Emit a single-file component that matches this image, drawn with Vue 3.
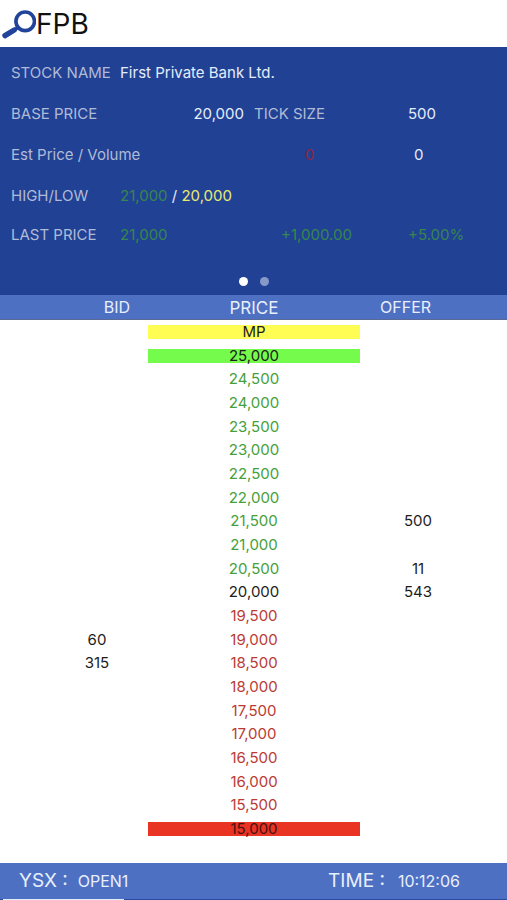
<script setup>
const rows = [{ price: 'MP', tone: 'market' }]
const bids = { 19000: '60', 18500: '315' }
const offers = { 21500: '500', 20500: '11', 20000: '543' }
const base = 20000
const ceiling = 25000
const floor = 15000

for (let p = ceiling; p >= floor; p -= 500) {
  let tone = 'base'
  if (p === ceiling) tone = 'ceiling'
  else if (p === floor) tone = 'floor'
  else if (p > base) tone = 'up'
  else if (p < base) tone = 'down'
  rows.push({ price: p.toLocaleString('en-US'), tone, bid: bids[p], offer: offers[p] })
}
</script>

<template>
  <div class="page">
    <header class="top">
      <button class="search" type="button" aria-label="Search">
        <svg viewBox="0 0 36 32" width="36" height="32" fill="none" stroke="#21439a">
          <circle cx="25.2" cy="13.3" r="9.3" stroke-width="3.6" />
          <path d="M18 19.4 14 22.4" stroke-width="3.6" />
          <path d="M14.2 22 5 27.6" stroke-width="5.4" stroke-linecap="round" />
        </svg>
      </button>
      <h1>FPB</h1>
    </header>

    <section class="summary">
      <div class="line">
        <span class="label">STOCK NAME</span>
        <span class="name">First Private Bank Ltd.</span>
      </div>
      <div class="line">
        <span class="label">BASE PRICE</span>
        <span class="right">20,000</span>
        <span class="label">TICK SIZE</span>
        <span>500</span>
      </div>
      <div class="line">
        <span class="label pair">Est Price / Volume</span>
        <span class="est">0</span>
        <span class="volume">0</span>
      </div>
      <div class="line">
        <span class="label">HIGH/LOW</span>
        <span class="range"><span class="gain">21,000</span> / <span class="low">20,000</span></span>
      </div>
      <div class="line last">
        <span class="label">LAST PRICE</span>
        <span class="gain">21,000</span>
        <span class="gain change">+1,000.00</span>
        <span class="gain">+5.00%</span>
      </div>
      <div class="dots">
        <button class="dot active" type="button" aria-label="Page 1"></button>
        <button class="dot" type="button" aria-label="Page 2"></button>
      </div>
    </section>

    <table class="book">
      <thead>
        <tr>
          <th class="bid" scope="col">BID</th>
          <th class="price" scope="col">PRICE</th>
          <th class="offer" scope="col">OFFER</th>
        </tr>
      </thead>
      <tbody>
        <tr v-for="row in rows" :key="row.price">
          <td class="bid">{{ row.bid }}</td>
          <td class="price"><span :class="['level', row.tone]">{{ row.price }}</span></td>
          <td class="offer">{{ row.offer }}</td>
        </tr>
      </tbody>
    </table>

    <footer class="status">
      <span class="key">YSX :</span>
      <span class="value">OPEN1</span>
      <span class="key time">TIME :</span>
      <span class="value clock">10:12:06</span>
    </footer>
    <div class="edge"><div class="tab"></div></div>
  </div>
</template>

<style>
body {
  margin: 0;
  background: #fff;
}
</style>

<style scoped>
.page {
  display: flex;
  flex-direction: column;
  min-height: 100vh;
  font-family: Inter, "Liberation Sans", sans-serif;
  font-size: 15px;
  line-height: 18px;
  color: #1c1c1c;
}
.top {
  display: flex;
  align-items: center;
  height: 47px;
}
.search {
  display: flex;
  padding: 0;
  border: 0;
  background: none;
}
h1 {
  margin: 0;
  font-size: 28px;
  line-height: 32px;
  font-weight: 400;
  color: #111;
}
.summary {
  padding-top: 5px;
  background: #214195;
  color: #e4edfb;
}
.line {
  display: grid;
  grid-template-columns: 109fr 134fr 154fr 99fr;
  align-items: center;
  height: 41px;
  padding-left: 11px;
  white-space: nowrap;
}
.line.last {
  height: 38px;
}
.label {
  color: #b0bbd6;
}
.name {
  grid-column: 2 / 5;
}
.right {
  padding-right: 10px;
  text-align: right;
}
.pair {
  grid-column: 1 / 3;
}
.est {
  padding-left: 51px;
  color: #8c2745;
}
.volume {
  padding-left: 6px;
}
.gain {
  color: #37864f;
}
.low {
  color: #e9ea72;
}
.change {
  padding-left: 27px;
}
.dots {
  display: flex;
  justify-content: center;
  gap: 12px;
  padding: 23px 0 9px;
}
.dot {
  width: 9px;
  height: 9px;
  padding: 0;
  border: 0;
  border-radius: 50%;
  background: #8799c9;
}
.dot.active {
  background: #fff;
}
.book {
  display: flex;
  flex: 1;
  flex-direction: column;
  margin-bottom: 22px;
}
.book tr {
  display: grid;
  grid-template-columns: 148fr 212fr 147fr;
  align-items: center;
}
.book th,
.book td {
  padding: 0;
  text-align: center;
  font-weight: 400;
}
.book thead {
  display: block;
  background: #4e70c3;
  border-bottom: 1px solid #5a6a94;
  color: #e8effc;
}
.book thead tr {
  height: 24px;
}
.book th {
  font-size: 16px;
}
.book th.bid {
  padding-right: 18px;
  text-align: right;
}
.book th.price {
  padding-top: 2px;
  font-size: 17px;
}
.book th.offer {
  padding-left: 20px;
  text-align: left;
}
.book tbody {
  display: grid;
  flex: 1;
  grid-auto-rows: 1fr;
}
.book td.bid {
  padding-left: 46px;
}
.book td.offer {
  padding-right: 31px;
}
.level {
  display: block;
  height: 14px;
  line-height: 14px;
}
.market {
  background: #fffd54;
}
.ceiling {
  background: #75fb4c;
}
.floor {
  background: #e93323;
  color: #4a1010;
}
.up {
  color: #46a03a;
}
.down {
  color: #bb3a33;
}
.status {
  display: flex;
  align-items: center;
  height: 36px;
  padding: 0 47px 0 19px;
  background: #4e70c3;
  color: #e8effc;
}
.key {
  font-size: 19px;
}
.value {
  padding-left: 10px;
  font-size: 16px;
}
.time {
  margin-left: auto;
}
.clock {
  padding-left: 13px;
}
.edge {
  padding-left: 3px;
  background: #2a4ba3;
}
.tab {
  width: 24%;
  height: 1px;
  background: #e4ebf8;
}
</style>
